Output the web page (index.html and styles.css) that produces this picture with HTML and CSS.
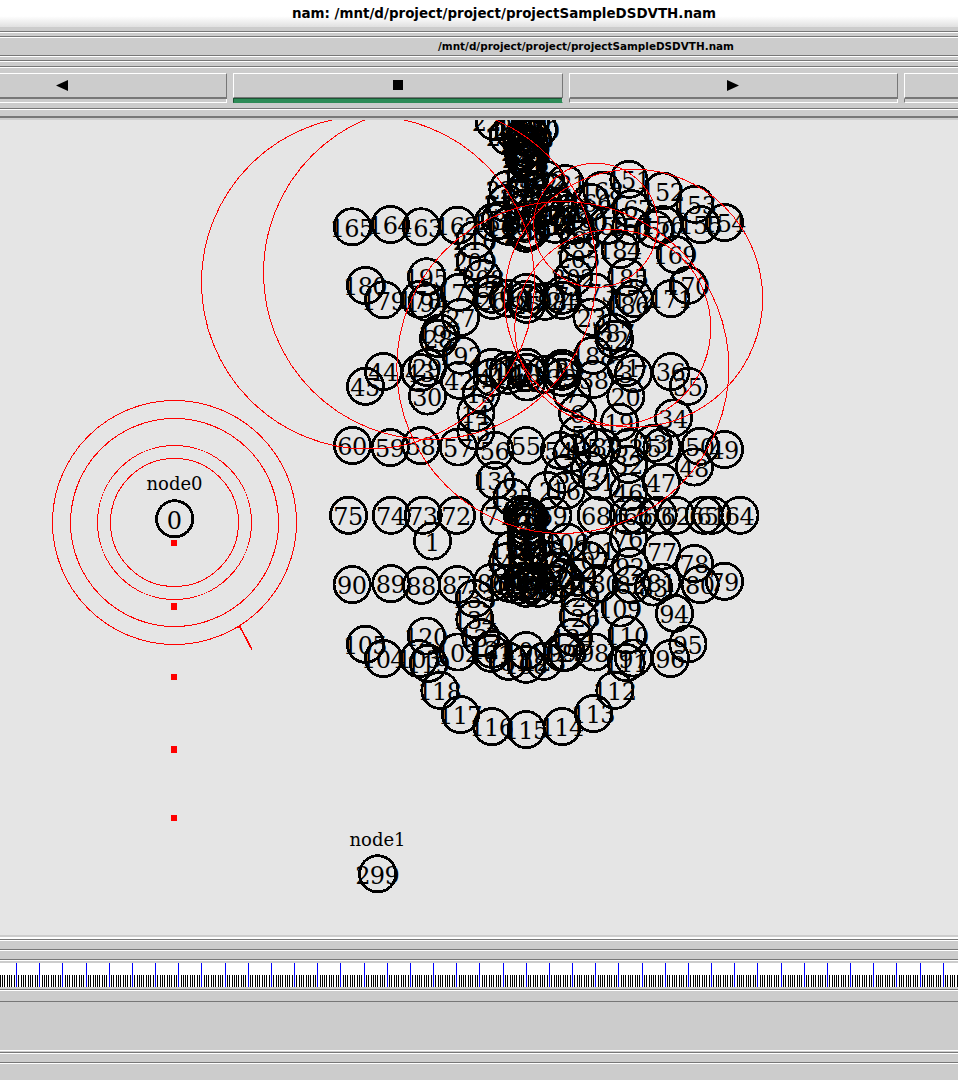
FILE: index.html
```html
<!DOCTYPE html>
<html lang="en">
<head>
<meta charset="utf-8">
<title>nam: /mnt/d/project/project/projectSampleDSDVTH.nam</title>
<link rel="stylesheet" href="styles.css">
</head>
<body>
<header class="titlebar"><span class="title">nam: /mnt/d/project/project/projectSampleDSDVTH.nam</span></header>
<div class="rule gap4"></div>
<div class="rule gap4"></div>
<div class="filebar"><span class="filename">/mnt/d/project/project/projectSampleDSDVTH.nam</span></div>
<div class="rule"></div>
<div class="rule gap3"></div>
<div class="rule gap5"></div>
<nav class="controls">
  <button class="control back" aria-label="Play backward"><svg width="12" height="11" viewBox="0 0 12 11"><path d="M0 5.5 12 0V11Z"/></svg></button>
  <button class="control active" aria-label="Stop"><svg width="10" height="10" viewBox="0 0 10 10"><path d="M0 0H10V10H0Z"/></svg></button>
  <button class="control" aria-label="Play forward"><svg width="12" height="11" viewBox="0 0 12 11"><path d="M12 5.5 0 0V11Z"/></svg></button>
  <button class="control last" aria-label="Fast forward"></button>
</nav>
<div class="rule"></div>
<div class="canvas-edge"></div>
<main class="canvas">
  <svg id="network" width="958" height="815" viewBox="0 120 958 815">
    <g id="nodes"></g>
    <g class="names"><text x="174.5" y="489.5">node0</text><text x="377.5" y="845.5">node1</text></g>
    <g class="waves">
      <circle cx="174.5" cy="522.5" r="122"/><circle cx="174.5" cy="522.5" r="104"/>
      <circle cx="174.5" cy="522.5" r="77"/><circle cx="174.5" cy="522.5" r="64"/>
      <circle cx="368" cy="282.5" r="166.5"/><circle cx="430" cy="273" r="166.5"/>
      <circle cx="562.8" cy="367.5" r="166"/><circle cx="633.6" cy="298.3" r="129"/>
      <circle cx="595.7" cy="225.3" r="62"/><circle cx="612.8" cy="327.6" r="98"/>
      <path class="tip" d="M237 627.5 239.5 626 252 649.5"/>
    </g>
    <g class="packets">
      <rect x="171" y="540" width="6" height="6"/><rect x="171" y="603" width="6" height="7"/>
      <rect x="171" y="674" width="6" height="6"/><rect x="171" y="746" width="6" height="7"/>
      <rect x="171" y="815" width="6" height="6"/>
    </g>
  </svg>
</main>
<div class="lower-edge"></div>
<div class="rule"></div>
<div class="rule gap8"></div>
<div class="rule gap8"></div>
<svg id="timeline" class="timeline" width="958" height="24" viewBox="0 0 958 24"></svg>
<div class="rule"></div>
<section class="panel"></section>
<div class="rule gap-after"></div>
<div class="rule gap8"></div>
<script src="script.js"></script>
</body>
</html>
```
FILE: styles.css
```css
*, *::before { box-sizing: border-box; }
body { margin: 0; width: 958px; height: 1080px; overflow: hidden; background: #ccc; color: #000; display: flex; flex-direction: column; font-family: "DejaVu Sans", sans-serif; }
body > * { flex: none; }
.titlebar { height: 27px; margin-bottom: 4px; padding-left: 50px; text-align: center; background: linear-gradient(#fff 0 60%, #e0e0e0); font-weight: bold; font-size: 13.45px; line-height: 27px; white-space: nowrap; }
.rule { height: 2px; background: #fff; border-top: 1px solid #777; }
.rule.gap3 { margin-top: 3px; }
.rule.gap4 + .gap4 { margin-top: 3px; }
.rule.gap5 { margin-top: 4px; }
.rule.gap8 { margin-top: 8px; }
.filebar { height: 17px; padding-left: 214px; text-align: center; font-weight: bold; font-size: 10.43px; line-height: 17px; white-space: nowrap; }
.controls { display: flex; gap: 6px; height: 40px; padding-top: 5px; overflow: hidden; }
.control { position: relative; flex: 0 0 329.67px; height: 30px; padding: 6px 0 0; background: #ccc; border: 1px solid; border-color: #fff #fff #fff #777; display: flex; justify-content: center; align-items: flex-start; }
.control::before { content: ""; position: absolute; left: -1px; right: -1px; top: -1px; height: 26px; border: solid; border-width: 1px 1px 2px; border-color: #fff #777 #777 #fff; }
.control.back { flex-basis: 227px; padding-right: 103px; border-left: 0; }
.control.back::before { border-left: 0; }
.control.last { flex: 1 1 0; border-right: 0; }
.control.last::before { right: 0; border-right: 0; }
.control.active { border-color: #fff #ccc #2e8b57 #1c5434; background: linear-gradient(#ccc 24px, #1c5434 24px 25px, #2e8b57 25px); }
.control.active::before { height: 25px; border-bottom-width: 1px; }
.canvas-edge { height: 10px; border-bottom: 2px solid #ccc; box-shadow: inset 0 -2px #777; }
.canvas { height: 815px; background: #e5e5e5; overflow: hidden; }
.canvas svg, .timeline { display: block; }
.names, .labels { font-family: "DejaVu Serif", serif; text-anchor: middle; }
.names { font-size: 18px; }
.labels { font-size: 24px; letter-spacing: -0.6px; fill: #000; }
.node { fill: none; stroke: #000; stroke-width: 2.8px; shape-rendering: crispEdges; }
.waves { fill: none; stroke: #f00; stroke-width: 1px; shape-rendering: crispEdges; }
.tip { stroke-width: 1.6px; }
.packets { fill: #f00; }
.lower-edge { height: 4px; border-bottom: 2px solid #fff; }
.timeline { margin-top: 2px; margin-bottom: 2px; background: #fff; shape-rendering: crispEdges; }
.minor { fill: #000; }
.major { fill: #00f; }
.panel { height: 60px; border-bottom: 1px solid #fff; margin-bottom: 1px; background: linear-gradient(#ccc 10px, #777 10px 11px, #ccc 11px); }
```
FILE: script.js
```js
const nodes = `
0 174.5 518.5;299 377.5 873.5;1 432.3 540.7
165 352 226.5;164 390.3 224.3;163 421 226.5;162 457.3 225;161 493 222;160 508 226;159 526 230;210 475 239.5;209 475 261;208 482.7 278
227 507.7 189;212 506 203;195 426.5 276.5;180 365.3 285.3;179 383.5 299.5;178 420 299;194 427 302;177 459 292;27 460.5 317
176 491.7 294;26 491.7 300;196 508 298;175 526.5 292;25 526.5 304;197 526 299;24 562 300;174 562 295;198 545 301
151 628.7 179;152 662.7 190.7;153 694.7 204;154 724.3 222.3;155 700.7 224.3;168 601.7 190;166 590 202;167 631 208.3
158 607.3 225;157 630.7 225.7;150 654 229;156 663 224.3;184 620 249.3;169 675.3 254.3;170 688 285;185 626.7 276.7;171 670.7 298.3;186 628 304;172 634 298.3;173 594.3 291.7
221 565 183.3;206 579.3 239.3;205 578.3 258;202 573.3 276.7;23 591.7 316.7;187 613 332;22 614.3 339;188 592.7 355
21 625.7 367.3;37 633.3 373.3;36 670.7 371.3;35 688 386;20 625.7 396;38 594 379;34 673.3 417.7;19 619.3 422;6 577.3 412.7;7 571.7 393;5 578.3 434
44 383.3 371.3;45 365.3 386;43 420 372.3;29 427.3 367.3;30 427.3 395.7;28 438.3 338.3;193 440 332.7;192 461 355;42 459.3 380
41 491.7 377;191 491.7 367;12 508 375;11 508 370;190 526.5 367;10 526.5 372;40 526.5 381.7;9 544 374;39 562 377;189 562 368;8 562 371
13 481 393.3;14 475.7 412.7;15 475.7 430.7;60 352.3 445.3;59 390 447.3;58 420.7 445.3;57 458 446.7;56 494.7 450;55 526 445.3
54 559.3 450;53 601.7 447.3;52 629 447;51 661.7 446.7;50 700 446;49 724.3 449.3;48 694.3 466.7;47 661 482;33 653 443;32 628.3 464.3;4 571.7 453;18 592 446;3 562.7 474;17 589 470;2 546.7 490;16 566 490;31 601 481;46 628.3 491.7
136 495 480;135 511.7 497;75 348.3 515;74 391 515;73 423 515;72 456.3 515;71 499 515.3;70 526 515;69 552.7 515;68 596 515;67 628 515;66 638 515;63 658 515;62 675.7 515;65 704 515;61 711.7 515;64 739.7 515
76 628.3 538.3;77 662 550.7;78 694.3 563.3;79 724.3 581;80 700 584.3;81 661.7 581.7;83 653.3 586.7;92 630 566;82 631 584.3;91 601 550;106 566.7 541.7;107 588 560;130 598.3 583
90 352 584.3;89 390.7 583.3;88 421.3 585;87 457 584.3;86 491.7 582;156 511.7 549.3;143 507.7 561;133 474.3 598.3;134 474.7 619;132 480.7 637.3;128 579 597;126 578.3 616.7;124 573.3 637
109 620 607.7;110 627 634.5;94 674.3 613;95 687.7 643.7;96 670.3 658.3;97 633.3 657.7;111 626 662.3;98 594.3 651.7;99 562.3 652.3;101 490.7 653;100 526 650.3;108 526 664;131 508.3 661;123 544 661;125 566 652;121 492 649
105 365.3 644;104 383.3 658.3;103 419 658.3;119 428.3 663;120 426 635.7;102 457.7 651.7;118 439.7 690;117 460.3 714.3;116 491.7 726.3;115 526 729.3;114 562 726.3;113 593.3 713.3;112 614.7 690
220 494 121;231 508 136;240 538 129;241 520 126;242 528 132;243 532 138;244 522 143;245 526 148;246 529 154;247 524 158;248 527 162;250 514 131;251 530 121;252 526 137;253 529 145;254 523 151;255 527 157
222 545 179;223 549 192;224 543 203;225 558 207;226 568 213;228 522 197;214 523 222;215 530 230;217 546 217;218 555 224;219 574 225;230 586 221;232 525 208;238 500 220
258 526 178;259 527 188;236 526 233
137 522 514;138 529 517;139 526 521;140 526 526;144 526 541;145 527 549;147 528 562;149 526 572;265 523 581;266 530 584;267 526 588;268 518 585;269 536 581;271 509 583;274 555 584;275 562 578;277 538 588;278 543 548;279 550 560;281 557 571;284 577 577
141 526 532
`.trim().split(/[;\n]/).map(row => row.split(" "));

const circles = nodes.map(([, x, y]) => `<circle class="node" cx="${+x + 0.2}" cy="${+y + 0.3}" r="18.1"/>`).join("");
const labels = nodes.map(([id, x, y]) => `<text x="${+x - 0.3}" y="${Math.round(+y + 10)}">${id}</text>`).join("");
document.getElementById("nodes").innerHTML = circles + `<g class="labels">${labels}</g>`;

// Every tenth tick spans the full height of the timeline.
let ticks = "";
for (let i = -7; i < 407; i++) {
  const x = Math.round(16.05 + i * 2.3167);
  const major = i % 10 === 0;
  ticks += `<rect class="${major ? "major" : "minor"}" x="${x}" y="${major ? 0 : 12}" width="1" height="${major ? 24 : 12}"/>`;
}
document.getElementById("timeline").innerHTML = ticks;
```
